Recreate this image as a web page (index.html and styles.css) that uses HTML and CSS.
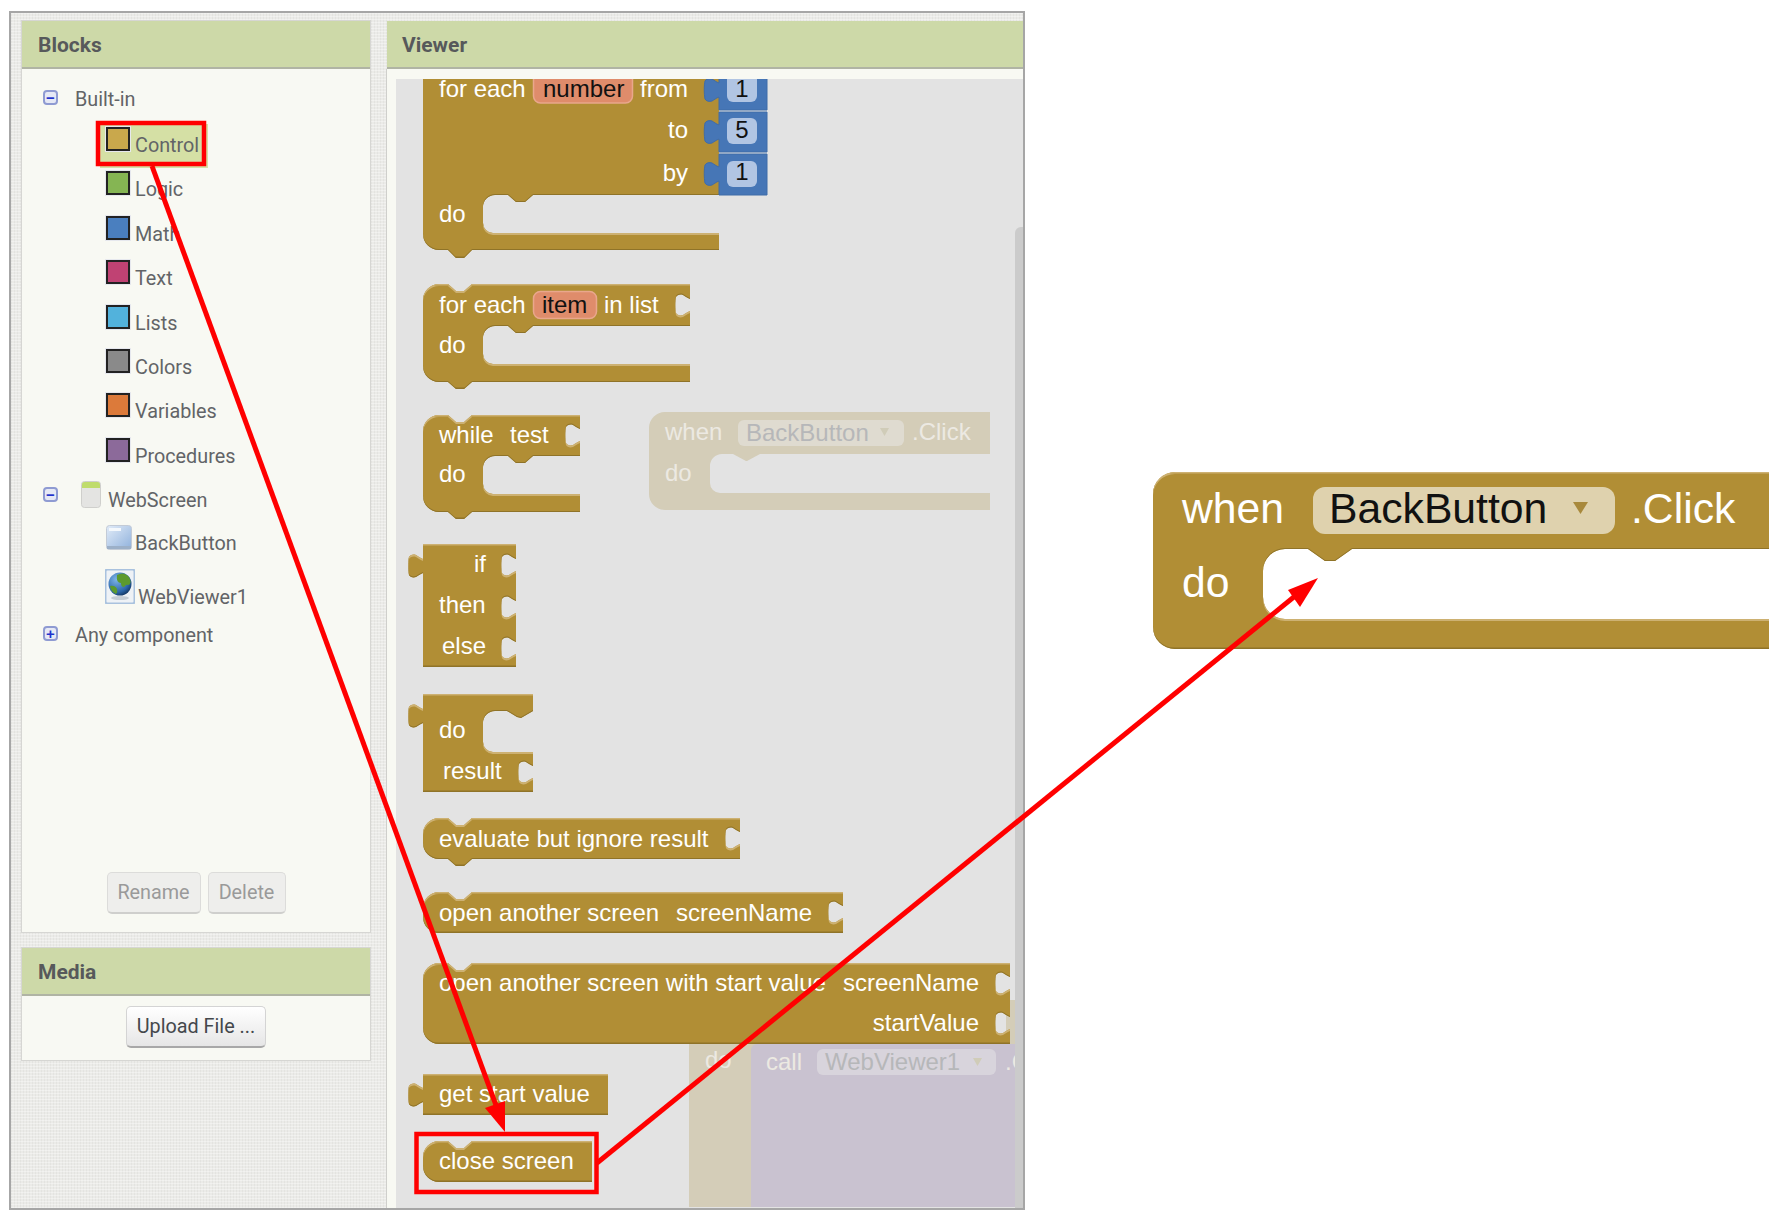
FILE: index.html
```html
<!DOCTYPE html>
<html>
<head>
<meta charset="utf-8"/>
<title>Blocks</title>
<link rel="stylesheet" href="styles.css">
</head>
<body>
<div class="page">
<div class="frame">
    <div class="side">
        <div class="card blocks-card">
            <h2 class="bar">Blocks</h2>
            <ul class="tree">
                <li class="row row-top"><span class="toggle">&#8722;</span><span class="label">Built-in</span></li>
                <li class="row row-sub selected"><span class="swatch c-control"></span><span class="label">Control</span></li>
                <li class="row row-sub"><span class="swatch c-logic"></span><span class="label">Logic</span></li>
                <li class="row row-sub"><span class="swatch c-math"></span><span class="label">Math</span></li>
                <li class="row row-sub"><span class="swatch c-text"></span><span class="label">Text</span></li>
                <li class="row row-sub"><span class="swatch c-lists"></span><span class="label">Lists</span></li>
                <li class="row row-sub"><span class="swatch c-colors"></span><span class="label">Colors</span></li>
                <li class="row row-sub"><span class="swatch c-vars"></span><span class="label">Variables</span></li>
                <li class="row row-sub"><span class="swatch c-procs"></span><span class="label">Procedures</span></li>
                <li class="row row-screen">
                    <span class="toggle toggle-screen">&#8722;</span>
                    <svg class="ico-screen" width="20" height="27" viewBox="0 0 20 27">
                        <rect x="0.5" y="0.5" width="19" height="26" rx="3" fill="#e4e4e2" stroke="#cfcfcc"/>
                        <path d="M1 7V3.5A2.5 2.5 0 0 1 3.5 1h13A2.5 2.5 0 0 1 19 3.5V7z" fill="#bfdc6c"/>
                    </svg>
                    <span class="label">WebScreen</span>
                </li>
                <li class="row row-sub row-back">
                    <svg class="ico-back" width="26" height="25" viewBox="0 0 26 25">
                        <defs><linearGradient id="backfill" x1="0" y1="0" x2="1" y2="1"><stop offset="0" stop-color="#e2ecf8"/><stop offset="1" stop-color="#8fb1dc"/></linearGradient></defs>
                        <rect x="0.5" y="0.5" width="25" height="24" rx="3" fill="url(#backfill)" stroke="#c3cbd6"/>
                        <rect x="3" y="3" width="12" height="3" fill="#f4f8fc"/>
                        <rect x="1" y="21" width="24" height="3" fill="#9cb0c8"/>
                    </svg>
                    <span class="label">BackButton</span>
                </li>
                <li class="row row-sub row-web">
                    <svg class="ico-web" width="30" height="35" viewBox="0 0 30 35">
                        <defs><radialGradient id="globe" cx="0.35" cy="0.3" r="0.8"><stop offset="0" stop-color="#7fb6ea"/><stop offset="0.7" stop-color="#2c66a8"/><stop offset="1" stop-color="#0e2c52"/></radialGradient></defs>
                        <rect x="0.5" y="0.5" width="29" height="34" rx="2" fill="#eef2f6" stroke="#a9c2de" stroke-width="2"/>
                        <circle cx="15" cy="15" r="11.5" fill="url(#globe)"/>
                        <path d="M12 6q7-4 12 2q3 5 0 8q-3-1-5 2q-3 0-3-4q-5 0-4-8zM5 17q5-1 7 3q1 3-1 5q-5-2-6-8z" fill="#5c9a2e"/>
                        <ellipse cx="15" cy="29" rx="9" ry="2" fill="#c4ccd4"/>
                    </svg>
                    <span class="label">WebViewer1</span>
                </li>
                <li class="row row-top row-any"><span class="toggle">+</span><span class="label">Any component</span></li>
            </ul>
            <div class="actions">
                <button class="btn btn-off btn-rename">Rename</button>
                <button class="btn btn-off btn-delete">Delete</button>
            </div>
        </div>
        <div class="card media-card">
            <h2 class="bar">Media</h2>
            <div class="media-body"><button class="btn btn-upload">Upload File ...</button></div>
        </div>
    </div>

    <div class="viewer">
        <h2 class="bar bar-viewer">Viewer</h2>
        <div class="viewer-body">
            <div class="workspace">
                <svg class="canvas" width="629" height="1128" viewBox="396 79 629 1128">
                    <defs>
                        <filter id="bevel" x="-2%" y="-5%" width="104%" height="110%" color-interpolation-filters="sRGB">
                            <feOffset in="SourceAlpha" dy="1.5" result="down"/>
                            <feComposite in="SourceAlpha" in2="down" operator="out" result="topedge"/>
                            <feFlood flood-color="#cdb172"/>
                            <feComposite in2="topedge" operator="in" result="light"/>
                            <feOffset in="SourceAlpha" dy="-1.5" result="up"/>
                            <feComposite in="SourceAlpha" in2="up" operator="out" result="botedge"/>
                            <feFlood flood-color="#8f7328"/>
                            <feComposite in2="botedge" operator="in" result="dark"/>
                            <feMerge><feMergeNode in="SourceGraphic"/><feMergeNode in="light"/><feMergeNode in="dark"/></feMerge>
                        </filter>
                    </defs>

                    <!-- faded blocks lying behind the drawer -->
                    <path class="ghost" d="M649 428a16 16 0 0 1 16-16H990V454H760l-13 7h-1l-13-7H722a12 12 0 0 0-12 12V483a10 10 0 0 0 10 10H990V510H665a16 16 0 0 1-16-16z"/>
                    <text class="gt" x="665" y="440">when</text>
                    <rect class="gpill" x="738" y="420" width="166" height="26" rx="6"/>
                    <text class="gt2" x="746" y="441">BackButton</text>
                    <path class="gtri" d="M880 428h9l-4.500 8z"/>
                    <text class="gt" x="912" y="440">.Click</text>
                    <text class="gt" x="665" y="481">do</text>

                    <rect class="ghost" x="689" y="1040" width="70" height="170"/>
                    <path class="ghost" d="M1006 1000h12v48h-12z"/>
                    <rect class="gpurple" x="751" y="1044" width="270" height="170" rx="6"/>
                    <text class="gt" x="705" y="1068">do</text>
                    <text class="gt" x="766" y="1070">call</text>
                    <rect class="gpill2" x="817" y="1049" width="179" height="26" rx="6"/>
                    <text class="gt2" x="825" y="1070">WebViewer1</text>
                    <path class="gtri" d="M973 1058h9l-4.500 8z"/>
                    <text class="gt" x="1005" y="1070">.C</text>

                    <!-- for each number -->
                    <path class="block" d="M423 60H719V195H533l-8 7h-9l-8-7H495a12 12 0 0 0-12 12V223a10 10 0 0 0 10 10H719V250H472l-8 8h-8l-8-8H439a16 16 0 0 1-16-16z"/>
                    <text class="bt" x="439" y="97">for each</text>
                    <rect class="vpill" x="533.500" y="70" width="99" height="33" rx="7"/>
                    <text class="dt" x="543" y="97">number</text>
                    <text class="bt" x="640" y="97">from</text>
                    <text class="bt end" x="688" y="138">to</text>
                    <text class="bt end" x="688" y="181">by</text>
                    <text class="bt" x="439" y="222">do</text>

                    <path class="num" d="M719 60h48v50h-48V97c-3 1-5 3-7 4c-3 1-6 0-7-2c-1-5-1-14 0-18c1-2 4-3 7-2c2 1 4 3 7 4z"/>
                    <path class="num" d="M719 112h48v40h-48V139c-3 1-5 3-7 4c-3 1-6 0-7-2c-1-5-1-14 0-18c1-2 4-3 7-2c2 1 4 3 7 4z"/>
                    <path class="num" d="M719 154h48v41h-48V181c-3 1-5 3-7 4c-3 1-6 0-7-2c-1-5-1-14 0-18c1-2 4-3 7-2c2 1 4 3 7 4z"/>
                    <rect class="npill" x="727" y="70" width="30" height="32" rx="6"/>
                    <rect class="npill" x="727" y="118" width="30" height="26" rx="6"/>
                    <rect class="npill" x="727" y="161" width="30" height="26" rx="6"/>
                    <text class="dt mid" x="742" y="97">1</text>
                    <text class="dt mid" x="742" y="138">5</text>
                    <text class="dt mid" x="742" y="180">1</text>

                    <!-- for each item -->
                    <path class="block" d="M423 300a16 16 0 0 1 16-16H448l8 7h8l8-7H690V299c-3-1-5-3-7-4c-3-1-6 0-7 2c-1 4-1 12 0 16c1 2 4 3 7 2c2-1 4-3 7-4V326H533l-8 7h-9l-8-7H495a12 12 0 0 0-12 12V354a10 10 0 0 0 10 10H690V382H472l-8 7h-8l-8-7H439a16 16 0 0 1-16-16z"/>
                    <text class="bt" x="439" y="313">for each</text>
                    <rect class="vpill" x="533.500" y="291.500" width="63" height="27" rx="7"/>
                    <text class="dt" x="542" y="313">item</text>
                    <text class="bt" x="604" y="313">in list</text>
                    <text class="bt" x="439" y="353">do</text>

                    <!-- while test -->
                    <path class="block" d="M423 431a16 16 0 0 1 16-16H448l8 7h8l8-7H580V429c-3-1-5-3-7-4c-3-1-6 0-7 2c-1 4-1 12 0 16c1 2 4 3 7 2c2-1 4-3 7-4V456H533l-8 7h-9l-8-7H495a12 12 0 0 0-12 12V484a10 10 0 0 0 10 10H580V512H472l-8 7h-8l-8-7H439a16 16 0 0 1-16-16z"/>
                    <text class="bt" x="439" y="443">while</text>
                    <text class="bt" x="510" y="443">test</text>
                    <text class="bt" x="439" y="482">do</text>

                    <!-- if then else -->
                    <path class="block" d="M423 544H516V559c-3-1-5-3-7-4c-3-1-6 0-7 2c-1 4-1 12 0 16c1 2 4 3 7 2c2-1 4-3 7-4V601c-3-1-5-3-7-4c-3-1-6 0-7 2c-1 4-1 12 0 16c1 2 4 3 7 2c2-1 4-3 7-4V642c-3-1-5-3-7-4c-3-1-6 0-7 2c-1 4-1 12 0 16c1 2 4 3 7 2c2-1 4-3 7-4V667H423V573c-3 1-5 3-7 4c-3 1-6 0-7-2c-1-5-1-14 0-18c1-2 4-3 7-2c2 1 4 3 7 4z"/>
                    <text class="bt end" x="486" y="572">if</text>
                    <text class="bt" x="439" y="613">then</text>
                    <text class="bt" x="442" y="654">else</text>

                    <!-- do result -->
                    <path class="block" d="M423 694H533V711l-12 7l-4-1l-10-6H495a12 12 0 0 0-12 12V742a10 10 0 0 0 10 10H533V766c-3-1-5-3-7-4c-3-1-6 0-7 2c-1 4-1 12 0 16c1 2 4 3 7 2c2-1 4-3 7-4V792H423V723c-3 1-5 3-7 4c-3 1-6 0-7-2c-1-5-1-14 0-18c1-2 4-3 7-2c2 1 4 3 7 4z"/>
                    <text class="bt" x="439" y="738">do</text>
                    <text class="bt" x="443" y="779">result</text>

                    <!-- evaluate -->
                    <path class="block" d="M423 834a16 16 0 0 1 16-16H448l8 7h8l8-7H740V832c-3-1-5-3-7-4c-3-1-6 0-7 2c-1 4-1 12 0 16c1 2 4 3 7 2c2-1 4-3 7-4V859H472l-8 7h-8l-8-7H439a16 16 0 0 1-16-16z"/>
                    <text class="bt" x="439" y="847">evaluate but ignore result</text>

                    <!-- open another screen -->
                    <path class="block" d="M423 908a16 16 0 0 1 16-16H448l8 7h8l8-7H843V906c-3-1-5-3-7-4c-3-1-6 0-7 2c-1 4-1 12 0 16c1 2 4 3 7 2c2-1 4-3 7-4V933H439a16 16 0 0 1-16-16z"/>
                    <text class="bt" x="439" y="921">open another screen</text>
                    <text class="bt" x="676" y="921">screenName</text>

                    <!-- open another screen with start value -->
                    <path class="block" d="M423 979a16 16 0 0 1 16-16H448l8 7h8l8-7H1010V977c-3-1-5-3-7-4c-3-1-6 0-7 2c-1 4-1 12 0 16c1 2 4 3 7 2c2-1 4-3 7-4V1017c-3-1-5-3-7-4c-3-1-6 0-7 2c-1 4-1 12 0 16c1 2 4 3 7 2c2-1 4-3 7-4V1044H439a16 16 0 0 1-16-16z"/>
                    <text class="bt" x="439" y="991">open another screen with start value</text>
                    <text class="bt" x="843" y="991">screenName</text>
                    <text class="bt end" x="979" y="1031">startValue</text>

                    <!-- get start value -->
                    <path class="block" d="M423 1074H608V1115H423V1102c-3 1-5 3-7 4c-3 1-6 0-7-2c-1-5-1-14 0-18c1-2 4-3 7-2c2 1 4 3 7 4z"/>
                    <text class="bt" x="439" y="1102">get start value</text>

                    <!-- close screen -->
                    <path class="block" d="M423 1157a16 16 0 0 1 16-16H448l8 7h8l8-7H592V1182H439a16 16 0 0 1-16-16z"/>
                    <text class="bt" x="439" y="1169">close screen</text>
                </svg>
                <div class="scroll"></div>
            </div>
        </div>
    </div>
</div>

<svg class="callout" width="620" height="180" viewBox="1153 472 620 180">
    <path class="block" d="M1153 494a22 22 0 0 1 22-22H1769V549H1352l-17 12h-10l-17-12H1285a22 22 0 0 0-22 22V597a22 22 0 0 0 22 22H1769V649H1175a22 22 0 0 1-22-22z"/>
    <text class="bt big" x="1182" y="523">when</text>
    <rect class="fpill" x="1313" y="487" width="302" height="47" rx="12"/>
    <text class="dt big" x="1329" y="523">BackButton</text>
    <path class="ftri" d="M1573 502h15l-7.500 12z"/>
    <text class="bt big" x="1631" y="523">.Click</text>
    <text class="bt big" x="1182" y="597">do</text>
</svg>
</div>

<svg class="marks" width="1781" height="1219" viewBox="0 0 1781 1219">
    <rect class="mark mark-box" x="98" y="123" width="106" height="41"/>
    <rect class="mark mark-box" x="416.500" y="1134" width="180" height="58"/>
    <line class="mark" x1="152" y1="166" x2="497" y2="1108"/>
    <path class="head" d="M485 1108L505 1101V1132z"/>
    <line class="mark" x1="597" y1="1163" x2="1300" y2="592"/>
    <path class="head" d="M1288 590L1318 578L1300 607z"/>
</svg>
</body>
</html>
```
FILE: styles.css
```css
html,body{
margin:0;padding:0;
background:#fff;
}
body{
position:relative;
width:1781px;height:1219px;
overflow:hidden;
font-family:Roboto,"Liberation Sans",sans-serif;
}
.page{
display:flex;
align-items:flex-start;
padding:11px 0 0 9px;
}
.frame{
display:flex;
box-sizing:border-box;
width:1016px;height:1199px;
border:2px solid #a6a6a6;
background-color:#ebebe8;
background-image:
repeating-linear-gradient(0deg,rgba(255,255,255,.35) 0 1px,transparent 1px 3px),
repeating-linear-gradient(90deg,rgba(210,210,206,.3) 0 1px,transparent 1px 3px);
}
.side{
display:flex;
flex-direction:column;
gap:16px;
box-sizing:border-box;
width:376px;
padding:8px 0 0 11px;
}
.card{
display:flex;
flex-direction:column;
box-sizing:border-box;
width:348px;
background:#f8f9f3;
box-shadow:0 0 0 1px #d6d6d3;
}
.blocks-card{height:911px;}
.bar{
margin:0;
box-sizing:border-box;
height:48px;
padding-left:16px;
font-size:21px;
line-height:48px;
font-weight:bold;
color:#57595b;
background:#cdd9a8;
border-bottom:2px solid #b0b4a4;
}

/* tree */
.tree{
list-style:none;
margin:0;
padding:13px 0 0 0;
}
.row{
display:flex;
align-items:flex-start;
height:44.4px;
}
.row-top{height:46px;padding-left:21px;}
.row-sub{padding-left:84px;}
.row-screen{height:43px;padding-left:21px;}
.row-back{height:43px;}
.row-web{height:49px;}
.row-any{height:auto;}
.toggle{
box-sizing:border-box;
display:block;
width:15px;height:15px;
margin-top:8px;
font:bold 15px/12px "Liberation Sans",sans-serif;
text-align:center;
color:#2233cc;
background:#e6e9f5;
border:2px solid #8f9bd2;
border-radius:4px;
}
.toggle-screen{margin-top:4px;}
.label{
display:block;
margin-top:6px;
font-size:19.800px;
line-height:24px;
color:#626467;
white-space:nowrap;
}
.row-top .label{margin-left:17px;}
.swatch{
box-sizing:border-box;
display:block;
width:24px;height:24px;
margin:-1px 5px 0 0;
border:2px solid #222;
box-shadow:0 0 0 1px #e6e8ee;
}
.selected{
margin-left:78px;
padding-left:6px;
width:102px;
height:40px;
margin-top:-4px;
margin-bottom:4.400px;
padding-top:4px;
background:#d5e0a5;
}
.c-control{background:#c9a84c;}
.c-logic{background:#85b553;}
.c-math{background:#4a7fbf;}
.c-text{background:#c04273;}
.c-lists{background:#52b2dc;}
.c-colors{background:#8a8a8a;}
.c-vars{background:#dc7a3a;}
.c-procs{background:#8c6a9a;}
.ico-screen{margin:-2px 7px 0 23px;}
.ico-back{margin:-1px 3px 0 0;flex:none;}
.ico-web{margin:0 3px 0 -1px;flex:none;}
.row-web .label{margin-top:17px;}

/* buttons */
.actions{
display:flex;
justify-content:center;
gap:7px;
margin-top:auto;
padding-bottom:18px;
}
.btn{
box-sizing:border-box;
height:42px;
padding:0;
font-family:Roboto,"Liberation Sans",sans-serif;
font-size:19.800px;
border-radius:5px;
}
.btn-off{
color:#9a9a9a;
background:#eeeeec;
border:1px solid #dcdcda;
border-bottom:2px solid #cfcfcd;
}
.btn-rename{width:94px;}
.btn-delete{width:78px;}
.media-body{
display:flex;
justify-content:center;
padding:10px 0 12px;
}
.btn-upload{
width:140px;
color:#44484c;
background:linear-gradient(#ffffff,#e6e6e6);
border:1px solid #d4d4d4;
border-bottom:2px solid #a8a8a8;
}

/* viewer */
.viewer{
display:flex;
flex-direction:column;
flex:1;
min-width:0;
padding-top:8px;
margin-left:-1px;
}
.bar-viewer{margin-left:1px;padding-left:15px;}
.viewer-body{
flex:1;
padding:10px 0 0 9px;
background:#f8f9f3;
border-left:1px solid #cfcfcc;
min-height:0;
}
.workspace{
position:relative;
height:100%;
overflow:hidden;
background:#e3e3e3;
}
.canvas{display:block;}
.scroll{
position:absolute;
right:0;top:148px;bottom:0;
width:8px;
background:#cbcbcb;
border-radius:6px 0 0 0;
}

/* blocks */
.block{fill:#b18e35;filter:url(#bevel);}
.ghost{fill:#d4cdb8;}
.gpurple{fill:#c9c2d0;}
.gpill{fill:#dfdbd0;}
.gpill2{fill:#d8d4dc;}
.gtri{fill:#d0ccb8;}
.num{fill:#4676b6;stroke:#3f6ca8;}
.npill{fill:#b1c5e3;}
.vpill{fill:#df8c6b;stroke:#e9a78c;stroke-width:1.500;}
.fpill{fill:#dfd2ae;}
.ftri{fill:#a8893c;}
.bt,.dt,.gt,.gt2{
font-family:"Liberation Sans",Arial,sans-serif;
font-size:24px;
}
.bt{fill:#fff;}
.dt{fill:#111;}
.gt{fill:#ece9e2;}
.gt2{fill:#b6b7b9;}
.end{text-anchor:end;}
.mid{text-anchor:middle;}
.big{font-size:42.700px;}
.callout{
flex:none;
margin:461px 0 0 128px;
}

/* red annotations */
.marks{
position:absolute;
left:0;top:0;
pointer-events:none;
}
.mark{
fill:none;
stroke:#ff0000;
stroke-width:5px;
}
.mark-box{stroke-width:4.500px;}
.head{fill:#ff0000;}
```
